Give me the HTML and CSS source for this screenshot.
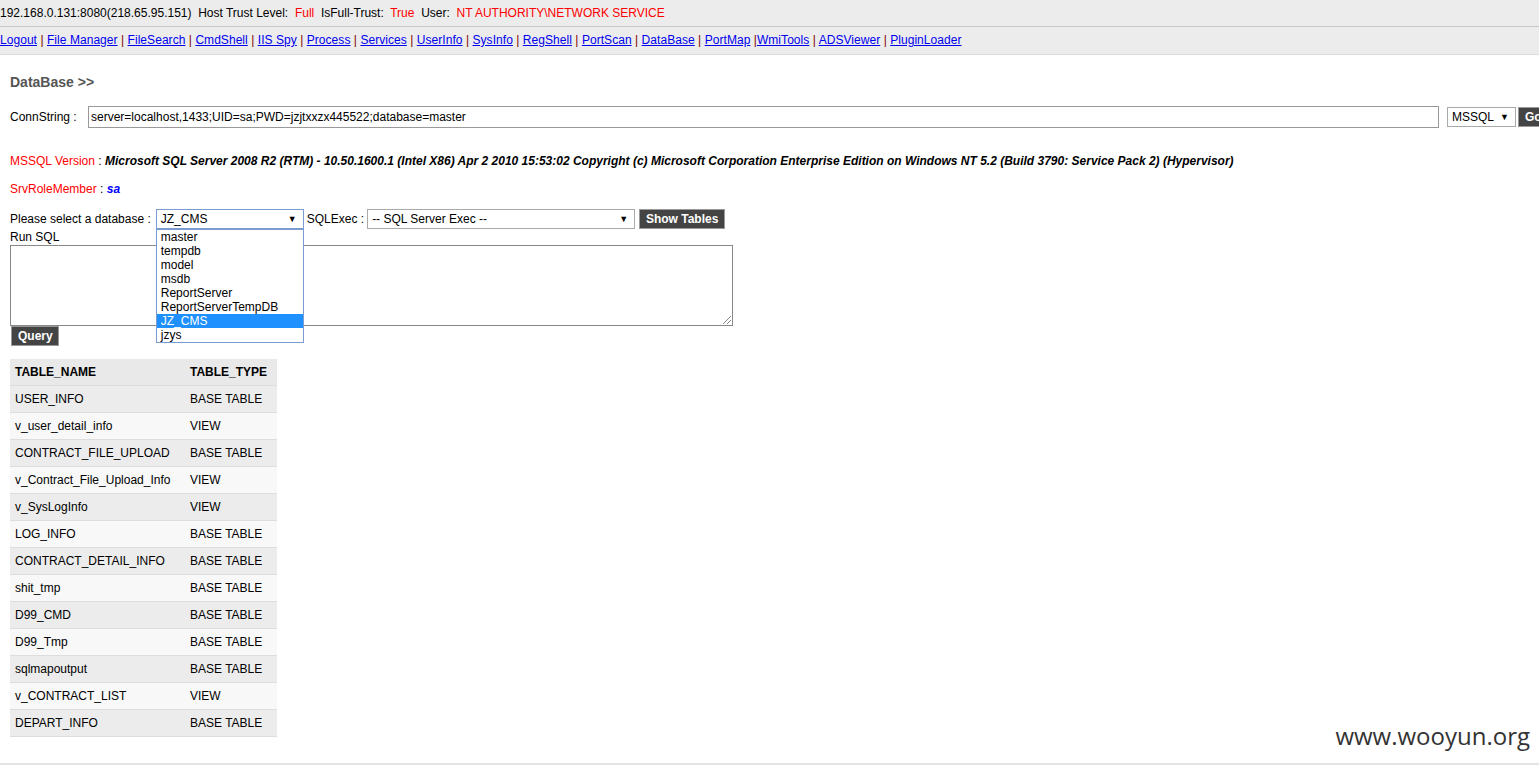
FILE: index.html
```html
<!DOCTYPE html>
<html lang="en">
<head>
  <meta charset="UTF-8">
  <title>DataBase</title>
  <link rel="stylesheet" href="styles.css">
</head>
<body>

<div class="topbar">
  192.168.0.131:8080(218.65.95.151)&nbsp; Host Trust Level:&nbsp; <span class="red">Full</span>&nbsp; IsFull-Trust:&nbsp; <span class="red">True</span>&nbsp; User:&nbsp; <span class="red">NT AUTHORITY\NETWORK SERVICE</span>
</div>

<div class="navbar">
  <a href="#">Logout</a> <span class="sep">|</span> <a href="#">File Manager</a> <span class="sep">|</span> <a href="#">FileSearch</a> <span class="sep">|</span> <a href="#">CmdShell</a> <span class="sep">|</span> <a href="#">IIS Spy</a> <span class="sep">|</span> <a href="#">Process</a> <span class="sep">|</span> <a href="#">Services</a> <span class="sep">|</span> <a href="#">UserInfo</a> <span class="sep">|</span> <a href="#">SysInfo</a> <span class="sep">|</span> <a href="#">RegShell</a> <span class="sep">|</span> <a href="#">PortScan</a> <span class="sep">|</span> <a href="#">DataBase</a> <span class="sep">|</span> <a href="#">PortMap</a> <span class="sep">|</span><a href="#">WmiTools</a> <span class="sep">|</span> <a href="#">ADSViewer</a> <span class="sep">|</span> <a href="#">PluginLoader</a>
</div>

<div class="content">
  <h2 class="title">DataBase &gt;&gt;</h2>

  <div class="conn-row">
    <span class="conn-label">ConnString :</span>
    <div class="text-input">server=localhost,1433;UID=sa;PWD=jzjtxxzx445522;database=master</div>
    <div class="select select-type">MSSQL <span class="arrow">&#9660;</span></div>
    <div class="btn btn-go">Go</div>
  </div>

  <p class="info"><span class="red">MSSQL Version</span> : <b><i>Microsoft SQL Server 2008 R2 (RTM) - 10.50.1600.1 (Intel X86) Apr 2 2010 15:53:02 Copyright (c) Microsoft Corporation Enterprise Edition on Windows NT 5.2 (Build 3790: Service Pack 2) (Hypervisor)</i></b></p>
  <p class="info role"><span class="red">SrvRoleMember</span> : <b><i class="blue">sa</i></b></p>

  <div class="db-row">
    <span>Please select a database :</span>
    <div class="db-wrap">
      <div class="select select-db">JZ_CMS <span class="arrow">&#9660;</span></div>
      <ul class="db-list">
        <li>master</li>
        <li>tempdb</li>
        <li>model</li>
        <li>msdb</li>
        <li>ReportServer</li>
        <li>ReportServerTempDB</li>
        <li class="active">JZ_CMS</li>
        <li>jzys</li>
      </ul>
    </div>
    <span class="exec-label">SQLExec :</span>
    <div class="select select-exec">-- SQL Server Exec -- <span class="arrow">&#9660;</span></div>
    <div class="btn btn-show">Show Tables</div>
  </div>

  <div class="run-label">Run SQL</div>
  <div class="sql-box"><span class="grip"></span></div>
  <div class="btn btn-query">Query</div>

  <table class="tables">
    <tr><th>TABLE_NAME</th><th>TABLE_TYPE</th></tr>
    <tr><td>USER_INFO</td><td>BASE TABLE</td></tr>
    <tr><td>v_user_detail_info</td><td>VIEW</td></tr>
    <tr><td>CONTRACT_FILE_UPLOAD</td><td>BASE TABLE</td></tr>
    <tr><td>v_Contract_File_Upload_Info</td><td>VIEW</td></tr>
    <tr><td>v_SysLogInfo</td><td>VIEW</td></tr>
    <tr><td>LOG_INFO</td><td>BASE TABLE</td></tr>
    <tr><td>CONTRACT_DETAIL_INFO</td><td>BASE TABLE</td></tr>
    <tr><td>shit_tmp</td><td>BASE TABLE</td></tr>
    <tr><td>D99_CMD</td><td>BASE TABLE</td></tr>
    <tr><td>D99_Tmp</td><td>BASE TABLE</td></tr>
    <tr><td>sqlmapoutput</td><td>BASE TABLE</td></tr>
    <tr><td>v_CONTRACT_LIST</td><td>VIEW</td></tr>
    <tr><td>DEPART_INFO</td><td>BASE TABLE</td></tr>
  </table>
</div>

<div class="footer-line"></div>

<div class="watermark">www.wooyun.org</div>

</body>
</html>
```

FILE: styles.css
```css
body {
  margin: 0;
  font-family: "Liberation Sans", Arial, sans-serif;
  font-size: 12px;
  color: #000;
  background: #fff;
  overflow-x: hidden;
  position: relative;
}

.red {
  color: #f00;
}

.blue {
  color: #00f;
}

.topbar {
  height: 26px;
  line-height: 26px;
  background: #ececec;
  border-bottom: 1px solid #c8c8c8;
  white-space: nowrap;
}

.navbar {
  height: 27px;
  line-height: 27px;
  background: #ececec;
  border-bottom: 1px solid #dcdcdc;
  white-space: nowrap;
  letter-spacing: 0.05px;
}

.navbar a {
  color: #00e;
  text-decoration: underline;
}

.sep {
  color: #800000;
}

.content {
  padding: 0 10px;
}

.title {
  margin: 17px 0 0;
  font-size: 14px;
  line-height: 20px;
  color: #555;
}

.conn-row {
  display: flex;
  align-items: center;
  margin-top: 14px;
  height: 22px;
  white-space: nowrap;
}

.conn-label {
  width: 78px;
  flex: none;
}

.text-input {
  box-sizing: border-box;
  width: 1351px;
  flex: none;
  height: 22px;
  line-height: 20px;
  border: 1px solid #999;
  padding: 0 2px;
}

.select {
  box-sizing: border-box;
  height: 20px;
  line-height: 18px;
  border: 1px solid #aaa;
  background: #fff;
  padding: 0 4px;
  position: relative;
  flex: none;
  white-space: nowrap;
}

.select .arrow {
  position: absolute;
  right: 6px;
  top: 0;
  font-size: 9px;
}

.select-type {
  width: 69px;
  margin-left: 8px;
}

.btn {
  box-sizing: border-box;
  height: 20px;
  line-height: 18px;
  background: #444;
  color: #fff;
  font-weight: bold;
  border: 1px solid #999;
  padding: 0 6px;
  flex: none;
  white-space: nowrap;
  text-align: center;
}

.btn-go {
  margin-left: 2px;
  width: 40px;
  text-align: left;
}

.info {
  margin: 25px 0 0;
  line-height: 16px;
  white-space: nowrap;
}

.info.role {
  margin-top: 12px;
}

.db-row {
  display: flex;
  align-items: center;
  margin-top: 12px;
  height: 20px;
}

.db-wrap {
  position: relative;
  margin-left: 5px;
}

.select-db {
  width: 148px;
  border-color: #7a9cd3;
}

.db-list {
  position: absolute;
  left: 0;
  top: 20px;
  z-index: 2;
  box-sizing: border-box;
  width: 148px;
  margin: 0;
  padding: 0;
  list-style: none;
  background: #fff;
  border: 1px solid #7a9cd3;
}

.db-list li {
  height: 14px;
  line-height: 14px;
  padding-left: 4px;
}

.db-list li.active {
  background: #1e90ff;
  color: #fff;
}

.exec-label {
  margin-left: 3px;
  margin-right: 3px;
}

.select-exec {
  width: 268px;
}

.btn-show {
  margin-left: 4px;
  width: 86px;
  padding: 0;
}

.run-label {
  line-height: 16px;
  margin-top: 0;
}

.sql-box {
  box-sizing: border-box;
  width: 723px;
  height: 81px;
  border: 1px solid #888;
  position: relative;
}

.grip {
  position: absolute;
  right: 1px;
  bottom: 1px;
  width: 8px;
  height: 8px;
  background: linear-gradient(135deg, transparent 45%, #888 45%, #888 52%, transparent 52%, transparent 70%, #888 70%, #888 77%, transparent 77%);
}

.btn-query {
  display: inline-block;
  vertical-align: top;
  margin-left: 1px;
  width: 48px;
}

.tables {
  margin-top: 13px;
  border-collapse: collapse;
  width: 267px;
}

.tables th,
.tables td {
  height: 26px;
  padding: 0 0 0 5px;
  text-align: left;
  border-bottom: 1px solid #ddd;
  white-space: nowrap;
}

.tables th:first-child,
.tables td:first-child {
  width: 170px;
}

.tables th {
  background: #e9e9e9;
  font-weight: bold;
}

.tables tr:nth-child(even) td {
  background: #ececec;
}

.tables tr:nth-child(odd) td {
  background: #f8f8f8;
}

.footer-line {
  margin-top: 26px;
  border-top: 2px solid #e4e4e4;
  height: 10px;
}

.watermark {
  position: absolute;
  right: 9px;
  top: 719px;
  font-family: "Open Sans", "DejaVu Sans", sans-serif;
  font-size: 24px;
  color: #333;
}
```
